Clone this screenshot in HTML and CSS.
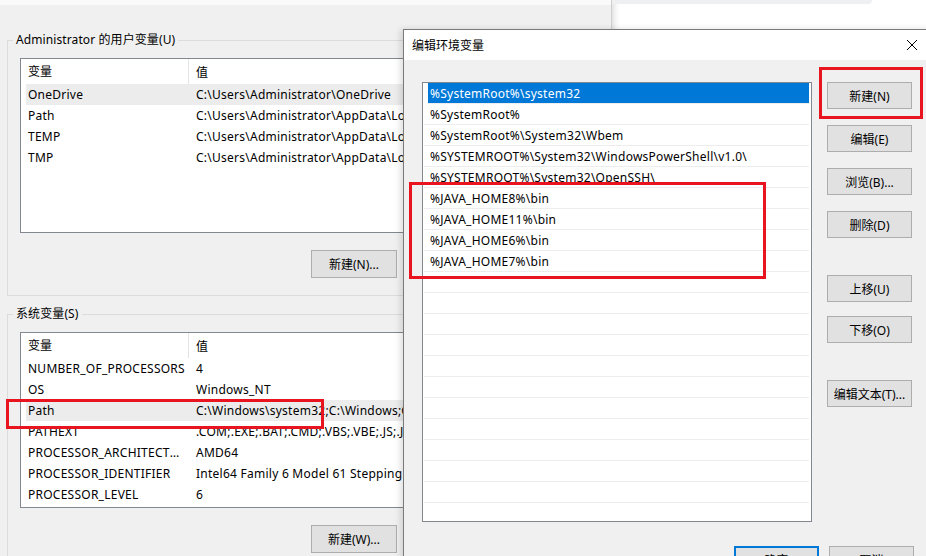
FILE: index.html
```html
<!DOCTYPE html>
<html lang="zh-CN">
<head>
<meta charset="utf-8">
<title>编辑环境变量</title>
<link rel="stylesheet" href="styles.css">
</head>
<body>
<div class="desktop">
  <div class="topwin"><div class="topbar"></div></div>

  <div class="bgwin">
    <div class="topstrip"></div>
    <fieldset class="group g1">
      <legend>Administrator 的用户变量(U)</legend>
      <div class="gbody">
        <div class="listview lv1">
          <div class="lv-head"><span class="c1">变量</span><span class="c2">值</span></div>
          <div class="lv-row hot"><span class="c1">OneDrive</span><span class="c2">C:\Users\Administrator\OneDrive</span></div>
          <div class="lv-row"><span class="c1">Path</span><span class="c2">C:\Users\Administrator\AppData\Local\Microsoft\WindowsApps;</span></div>
          <div class="lv-row"><span class="c1">TEMP</span><span class="c2">C:\Users\Administrator\AppData\Local\Temp</span></div>
          <div class="lv-row"><span class="c1">TMP</span><span class="c2">C:\Users\Administrator\AppData\Local\Temp</span></div>
        </div>
        <div class="btnrow">
          <button class="btn">新建(N)...</button>
          <button class="btn">编辑(E)...</button>
          <button class="btn">删除(D)</button>
        </div>
      </div>
    </fieldset>

    <fieldset class="group g2">
      <legend>系统变量(S)</legend>
      <div class="gbody">
        <div class="listview lv2">
          <div class="lv-head"><span class="c1">变量</span><span class="c2">值</span></div>
          <div class="lv-row"><span class="c1">NUMBER_OF_PROCESSORS</span><span class="c2">4</span></div>
          <div class="lv-row"><span class="c1">OS</span><span class="c2">Windows_NT</span></div>
          <div class="lv-row hot"><span class="c1">Path</span><span class="c2">C:\Windows\system32;C:\Windows;C:\Windows\System32\Wbem;</span></div>
          <div class="lv-row"><span class="c1">PATHEXT</span><span class="c2">.COM;.EXE;.BAT;.CMD;.VBS;.VBE;.JS;.JSE;.WSF;.WSH;.MSC</span></div>
          <div class="lv-row"><span class="c1">PROCESSOR_ARCHITECTURE</span><span class="c2">AMD64</span></div>
          <div class="lv-row"><span class="c1">PROCESSOR_IDENTIFIER</span><span class="c2">Intel64 Family 6 Model 61 Stepping 4, GenuineIntel</span></div>
          <div class="lv-row"><span class="c1">PROCESSOR_LEVEL</span><span class="c2">6</span></div>
        </div>
        <div class="btnrow">
          <button class="btn">新建(W)...</button>
          <button class="btn">编辑(I)...</button>
          <button class="btn">删除(L)</button>
        </div>
      </div>
    </fieldset>
  </div>

  <div class="dialog">
    <div class="titlebar">
      <span class="title">编辑环境变量</span>
      <span class="close">
        <svg width="12" height="12" viewBox="0 0 12 12"><path d="M1 1 L11 11 M11 1 L1 11" stroke="#000" stroke-width="1" fill="none"/></svg>
      </span>
    </div>
    <div class="dbody">
      <div class="dmain">
        <div class="plist">
          <div class="prow sel">%SystemRoot%\system32</div>
          <div class="prow">%SystemRoot%</div>
          <div class="prow">%SystemRoot%\System32\Wbem</div>
          <div class="prow">%SYSTEMROOT%\System32\WindowsPowerShell\v1.0\</div>
          <div class="prow">%SYSTEMROOT%\System32\OpenSSH\</div>
          <div class="prow">%JAVA_HOME8%\bin</div>
          <div class="prow">%JAVA_HOME11%\bin</div>
          <div class="prow">%JAVA_HOME6%\bin</div>
          <div class="prow">%JAVA_HOME7%\bin</div>
          <div class="prow"></div>
          <div class="prow"></div>
          <div class="prow"></div>
          <div class="prow"></div>
          <div class="prow"></div>
          <div class="prow"></div>
          <div class="prow"></div>
          <div class="prow"></div>
          <div class="prow"></div>
          <div class="prow"></div>
          <div class="prow"></div>
          <div class="prow"></div>
          <div class="prow"></div>
        </div>
        <div class="bcol">
          <button class="btn dbtn">新建(N)</button>
          <button class="btn dbtn">编辑(E)</button>
          <button class="btn dbtn">浏览(B)...</button>
          <button class="btn dbtn">删除(D)</button>
          <button class="btn dbtn sp1">上移(U)</button>
          <button class="btn dbtn sp0">下移(O)</button>
          <button class="btn dbtn sp2">编辑文本(T)...</button>
        </div>
      </div>
      <div class="dfoot">
        <button class="btn dbtn default">确定</button>
        <button class="btn dbtn">取消</button>
      </div>
    </div>
  </div>

  <div class="mark m1"></div>
  <div class="mark m2"></div>
  <div class="mark m3"></div>
</div>
</body>
</html>
```

FILE: styles.css
```css
html, body {
  margin: 0;
  padding: 0;
  background: #ffffff;
}

.desktop {
  position: relative;
  width: 926px;
  height: 556px;
  overflow: hidden;
  font-family: "Noto Sans", "Noto Sans CJK SC", sans-serif;
  font-size: 12px;
  color: #000;
}

button {
  font-family: inherit;
  font-size: 12px;
  color: #000;
}

/* window peeking at the top right */
.topwin {
  position: absolute;
  left: 612px;
  top: 0;
  width: 330px;
  height: 40px;
  background: #ffffff;
  box-shadow: inset 8px 0 6px -6px rgba(0, 0, 0, 0.15);
}

.topbar {
  width: 260px;
  height: 4px;
  background: #eef0f2;
  border-bottom-right-radius: 4px;
}

/* background window */
.bgwin {
  position: absolute;
  left: 0;
  top: 0;
  width: 611px;
  height: 600px;
  background: #f0f0f0;
  border-right: 1px solid #cfcfcf;
}

.topstrip {
  height: 5px;
  background: #fafafa;
}

.group {
  margin: 0 0 0 7px;
  padding: 0 0 17px 0;
  border: 1px solid #dcdcdc;
  width: 640px;
  box-sizing: border-box;
}

.g1 {
  margin-top: 27px;
}

.g2 {
  margin-top: 10px;
}

.group legend {
  margin-left: 5px;
  padding: 0 3px;
  line-height: 16px;
  height: 16px;
  letter-spacing: 0.1px;
}

.gbody {
  padding-left: 12px;
}

.listview {
  margin-top: 10px;
  width: 580px;
  box-sizing: border-box;
  background: #fff;
  border: 1px solid #828790;
  overflow: hidden;
}

.lv1 { height: 175px; }
.lv2 { height: 176px; }

.lv-head, .lv-row {
  display: flex;
  align-items: center;
  margin-left: 5px;
  white-space: nowrap;
}

.lv-head {
  height: 25px;
}

.lv-row {
  height: 21px;
  letter-spacing: 0.25px;
}

.lv-row.hot {
  background: #ececec;
}

.c1 {
  width: 163px;
  flex: none;
  box-sizing: border-box;
  padding-left: 2px;
  padding-right: 1px;
  overflow: hidden;
  text-overflow: ellipsis;
}

.lv-head .c1 {
  border-right: 1px solid #e5e5e5;
  height: 25px;
  line-height: 25px;
}

.c2 {
  padding-left: 7px;
}

.btnrow {
  display: flex;
  gap: 8px;
  margin-top: 17px;
  padding-left: 291px;
}

.btn {
  width: 86px;
  height: 28px;
  padding: 0;
  flex: none;
  background: #e1e1e1;
  border: 1px solid #adadad;
  box-sizing: border-box;
}

/* dialog */
.dialog {
  position: absolute;
  left: 403px;
  top: 29px;
  width: 540px;
  height: 560px;
  background: #f0f0f0;
  border: 1px solid #7a7a7a;
  box-sizing: border-box;
  box-shadow: -3px 0 6px rgba(0, 0, 0, 0.12);
}

.titlebar {
  height: 30px;
  background: #fff;
  display: flex;
  align-items: center;
  justify-content: space-between;
}

.title {
  padding-left: 8px;
}

.close {
  width: 46px;
  height: 30px;
  margin-right: 7px;
  display: flex;
  align-items: center;
  justify-content: center;
}

.close svg {
  display: block;
}

.dbody {
  padding: 22px 0 0 18px;
}

.dmain {
  display: flex;
  align-items: flex-start;
}

.plist {
  width: 390px;
  height: 440px;
  box-sizing: border-box;
  background: #fff;
  border: 1px solid #828790;
  overflow: hidden;
}

.prow {
  height: 21px;
  box-sizing: border-box;
  margin: 0 2px 0 1px;
  padding-left: 6px;
  line-height: 21px;
  border-bottom: 1px solid #ededed;
  white-space: nowrap;
  letter-spacing: 0.25px;
}

.prow.sel {
  margin-left: 5px;
  padding-left: 2px;
  background: #0078d7;
  color: #fff;
}

.bcol {
  display: flex;
  flex-direction: column;
  gap: 16px;
  margin-left: 15px;
}

.dbtn {
  width: 85px;
  height: 27px;
}

.bcol .sp1 { margin-top: 21px; }
.bcol .sp0 { margin-top: -2px; }
.bcol .sp2 { margin-top: 21px; }

.dfoot {
  display: flex;
  gap: 10px;
  margin-top: 24px;
  padding-left: 312px;
}

.dbtn.default {
  border: 2px solid #0078d7;
}

/* red annotation marks */
.mark {
  position: absolute;
  border: 3px solid #e8141f;
  box-sizing: border-box;
}

.m1 { left: 819px; top: 67px; width: 104px; height: 52px; }
.m2 { left: 409px; top: 182px; width: 357px; height: 97px; }
.m3 { left: 6px; top: 399px; width: 318px; height: 30px; }
```
